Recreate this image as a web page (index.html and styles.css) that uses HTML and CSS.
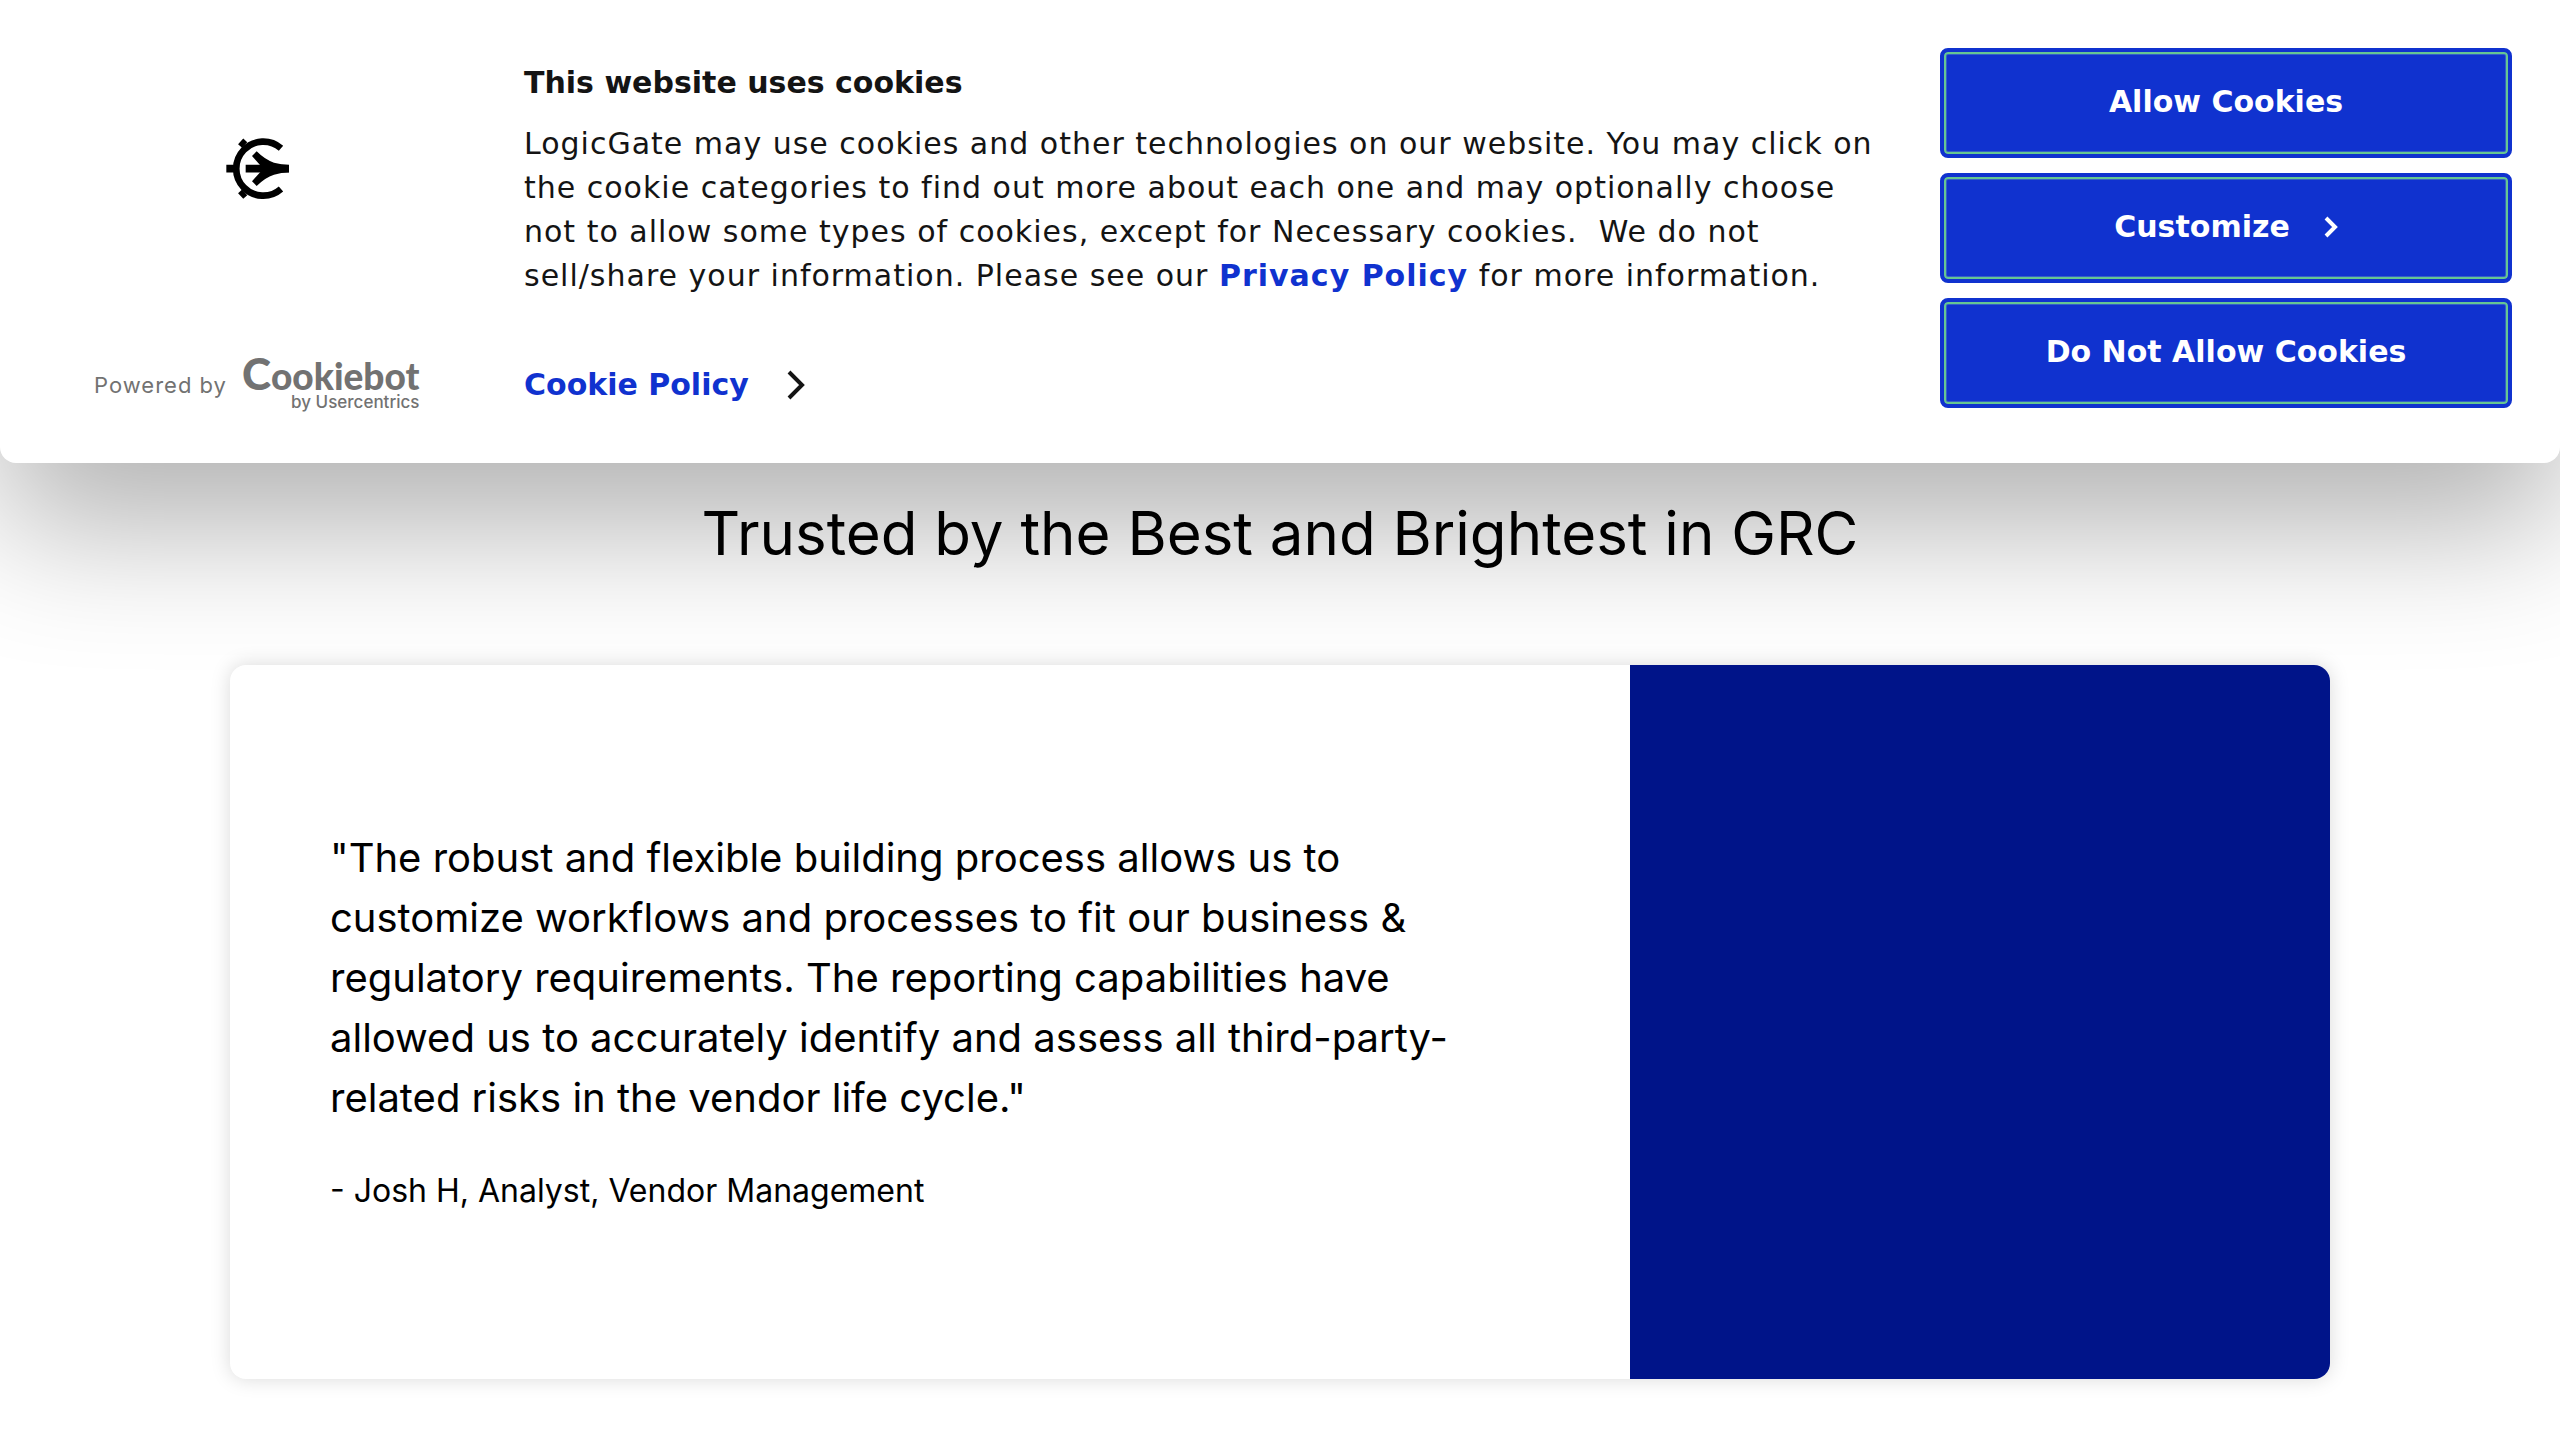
FILE: index.html
```html
<!DOCTYPE html>
<html lang="en">
<head>
<meta charset="utf-8">
<title>LogicGate</title>
<link rel="stylesheet" href="styles.css">
</head>
<body>
<section class="banner" role="dialog" aria-labelledby="banner-title">
  <div class="brand">
    <svg class="brand-logo" viewBox="78 82 192 192" aria-hidden="true">
      <g fill="none" stroke="#000">
        <path d="M243 116A81 81 0 1 0 243 238" stroke-width="20"/>
        <path d="M79 177H104M122 95L134 106M122 259L134 248" stroke-width="23"/>
        <path d="M137 177H267" stroke-width="23"/>
      </g>
      <path d="M156 139L170 125Q196 151 222 159Q244 165 267 166V188Q244 189 222 195Q196 203 170 229L156 215L190 177Z" fill="#000"/>
    </svg>
    <a class="powered" href="#">
      <span class="powered-by">Powered by</span>
      <span class="cookiebot">
        <span class="cookiebot-name"><span class="cookiebot-c">C</span>ookiebot</span>
        <span class="cookiebot-owner">by Usercentrics</span>
      </span>
    </a>
  </div>
  <div class="consent">
    <h2 class="consent-title" id="banner-title">This website uses cookies</h2>
    <p class="consent-text">LogicGate may use cookies and other technologies on our website. You may click on the cookie categories to find out more about each one and may optionally choose not to allow some types of cookies, except for Necessary cookies.&nbsp; We do not sell/share your information. Please see our <a class="link" href="#">Privacy Policy</a> for more information.</p>
    <a class="link policy" href="#">Cookie Policy
      <svg class="policy-arrow" viewBox="0 0 18 30" aria-hidden="true"><path d="M2 2L15 15L2 28" fill="none" stroke="#141414" stroke-width="4"/></svg>
    </a>
  </div>
  <div class="actions">
    <button class="button" type="button">Allow Cookies</button>
    <button class="button" type="button">Customize
      <svg class="button-arrow" viewBox="0 0 14 22" aria-hidden="true"><path d="M2 2L11 11L2 20" fill="none" stroke="#fff" stroke-width="4"/></svg>
    </button>
    <button class="button" type="button">Do Not Allow Cookies</button>
  </div>
</section>
<main class="testimonials">
  <h1 class="heading">Trusted by the Best and Brightest in GRC</h1>
  <article class="card">
    <blockquote class="quote">
      <p class="quote-text">"The robust and flexible building process allows us to customize workflows and processes to fit our business &amp; regulatory requirements. The reporting capabilities have allowed us to accurately identify and assess all third-party-related risks in the vendor life cycle."</p>
      <footer class="quote-author">- Josh H, Analyst, Vendor Management</footer>
    </blockquote>
    <div class="card-panel"></div>
  </article>
</main>
</body>
</html>
```
FILE: styles.css
```css
* { box-sizing: border-box; }

body {
  margin: 0;
  background: #fff;
  color: #000;
  font-family: Inter, "Liberation Sans", sans-serif;
}

h1, h2, p, blockquote { margin: 0; }

.banner {
  position: relative;
  z-index: 1;
  display: grid;
  grid-template-columns: 428px 1fr 572px;
  gap: 48px;
  padding: 48px 48px 55px;
  background: #fff;
  color: #141414;
  border-radius: 0 0 16px 16px;
  box-shadow: 0 64px 136px rgba(0, 0, 0, 0.3);
  font: 30px/44px "DejaVu Sans", sans-serif;
}

.brand {
  display: flex;
  flex-direction: column;
  justify-content: space-between;
  margin-bottom: -4px;
  padding-top: 89px;
}

.brand-logo {
  width: 64px;
  height: 64px;
  margin-left: 178px;
}

.powered {
  display: flex;
  align-items: center;
  gap: 15px;
  padding-left: 46px;
  color: #727272;
  font-family: Inter, sans-serif;
  text-decoration: none;
}

.powered-by {
  font-size: 22px;
  letter-spacing: 1px;
}

.cookiebot {
  display: flex;
  flex-direction: column;
  align-items: flex-end;
}

.cookiebot-name {
  font: 900 37px/32px Lato, sans-serif;
}

.cookiebot-c { font-size: 44px; }

.cookiebot-owner {
  font-size: 17px;
  font-weight: 500;
  line-height: 20px;
}

.consent-title {
  margin: 13px 0 17px;
  font-size: 30px;
  line-height: 44px;
}

.consent-text {
  padding-right: 16px;
  letter-spacing: 1px;
}

.link {
  color: #1032cf;
  font-weight: 700;
  text-decoration: none;
}

.policy {
  display: inline-flex;
  align-items: center;
  gap: 38px;
  margin-top: 65px;
}

.policy-arrow { width: 18px; height: 30px; }

.actions {
  display: flex;
  flex-direction: column;
  gap: 15px;
}

.button {
  display: flex;
  align-items: center;
  justify-content: center;
  gap: 34px;
  height: 110px;
  padding: 0 6px 2px;
  border: 4px solid #1032cf;
  border-radius: 8px;
  background: #1032cf;
  box-shadow: inset 0 0 0 2px #66c692, inset 0 0 0 3px #3560c8;
  color: #fff;
  font: 700 30px/36px "DejaVu Sans", sans-serif;
}

.button-arrow { width: 14px; height: 22px; }

.testimonials {
  padding: 34px 230px 61px;
}

.heading {
  font-size: 60px;
  font-weight: 400;
  line-height: 72px;
  text-align: center;
}

.card {
  display: grid;
  grid-template-columns: 2fr 1fr;
  margin-top: 96px;
  border-radius: 16px;
  overflow: hidden;
  background: #fff;
  box-shadow: 0 0 20px rgba(0, 0, 0, 0.15);
}

.quote { padding: 163px 100px 164px; }

.quote-text {
  font-size: 40px;
  line-height: 60px;
}

.quote-author {
  margin-top: 39px;
  font-size: 32px;
  line-height: 48px;
}

.card-panel { background: #001489; }
```
